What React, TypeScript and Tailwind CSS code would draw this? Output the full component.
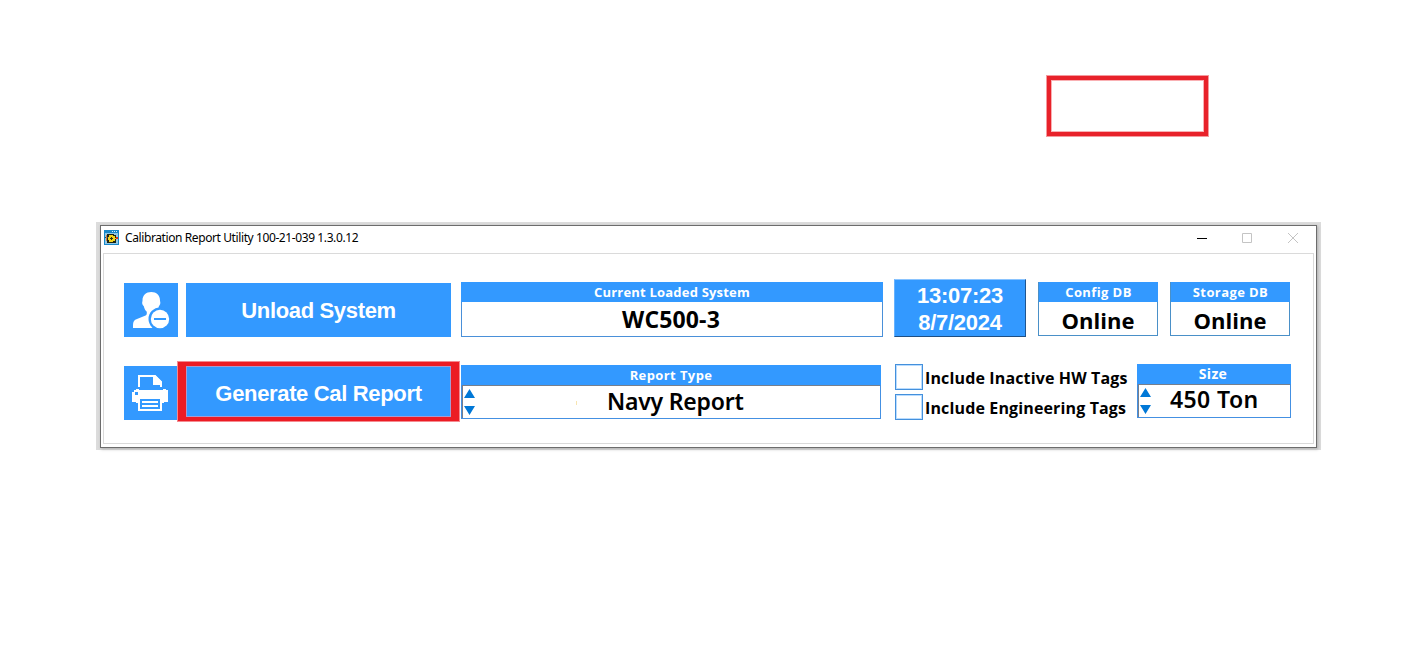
import type { ReactNode } from "react";

const segoe = "font-['Open_Sans','Noto_Sans',sans-serif]";
const arial = "font-['Liberation_Sans',Arial,sans-serif]";

function AppIcon() {
  return (
    <svg width="15" height="15" viewBox="0 0 15 15" shapeRendering="crispEdges">
      <rect width="15" height="15" fill="#1787c9" />
      <rect x="1" y="3" width="13" height="11" fill="#8fc7e6" />
      <rect x="8" y="1" width="1" height="1" fill="#d8efff" />
      <rect x="10" y="1" width="1" height="1" fill="#d8efff" />
      <rect x="12" y="1" width="1" height="1" fill="#d8efff" />
      <path d="M3 4h7v1h2v8H3z" fill="#1c2414" />
      <rect x="1" y="7" width="3" height="1" fill="#174a70" />
      <rect x="2" y="5" width="1" height="6" fill="#c77a42" />
      <rect x="12" y="7" width="2" height="2" fill="#d73526" />
      <path d="M5 5h4v1h2v2h1v1h-1v2H9v1H5v-2H4V7h1z" fill="#f3d31c" />
      <path d="M7 7h1v1h1v1H8v1H7V9H6V8h1z" fill="#27330f" />
    </svg>
  );
}

function UserMinusIcon() {
  return (
    <svg width="54" height="54" viewBox="0 0 54 54">
      <path
        d="M27.3 9c5.2 0 8.7 3.2 8.7 8.4 0 1 .5 1.500.3 2.800-.2 1.400-.7 2-1.300 2.700-.6 2.700-1.800 4.500-3 5.800v5.300l4 2V45H9v-3c0-3.500 1.300-5.200 4-6.100l8.600-3.500c.8-.4 1.200-1 1.200-1.900v-1.800c-1.400-1.300-2.500-3.100-3.100-5.800-.9-.7-1.400-1.500-1.500-2.700-.1-1.200.3-1.800.3-2.800C18.500 12.200 22 9 27.300 9z"
        fill="#fff"
      />
      <circle cx="36" cy="36" r="11.500" fill="#3399ff" />
      <circle cx="36" cy="36" r="9.200" fill="#fff" />
      <rect x="30" y="35" width="12" height="2" fill="#3399ff" />
    </svg>
  );
}

function PrinterIcon() {
  return (
    <svg width="54" height="54" viewBox="0 0 54 54">
      <path d="M15 21V10h16l6 6v5" fill="none" stroke="#fff" strokeWidth="2" />
      <path d="M29 9h2l7 7v3h-9z" fill="#fff" />
      <path d="M10 24h2v-1h3v1h24v-1h3v1h2v12h-4v1H12v-1H8V26h2z" fill="#fff" />
      <rect x="11" y="26" width="3" height="3" fill="#3399ff" />
      <rect x="14" y="32" width="24" height="13" fill="#fff" />
      <path d="M16 33h20v2H16zM18 37h16v2H18zM16 41h20v2H16zM16 33h2v10h-2zM34 33h2v10h-2z" fill="#3399ff" />
      <path d="M18 35h16v2H18zM18 39h16v2H18z" fill="#fff" />
    </svg>
  );
}

function Spinner() {
  return (
    <svg width="11" height="26" viewBox="0 0 11 26" className="shrink-0">
      <path d="M0 9 5.500 0 11 9zM0 17h11l-5.500 9z" fill="#0078d7" />
    </svg>
  );
}

function Button({ children }: { children: ReactNode }) {
  return (
    <button className={`ml-2 flex h-[54px] w-[265px] items-center justify-center bg-[#3399ff] text-[22px] font-bold tracking-[-0.34px] text-white ${arial}`}>
      {children}
    </button>
  );
}

function Status({ title, value }: { title: string; value: string }) {
  return (
    <div className="mt-[3px] ml-3 flex h-[54px] w-[120px] flex-col border border-[#4a90c8]">
      <div className={`-mt-px -mr-px flex h-5 items-center justify-center bg-[#3399ff] pt-0.5 text-[13px] font-bold tracking-[0.4px] text-white ${segoe}`}>
        {title}
      </div>
      <div className={`flex h-[35px] items-center justify-center pt-0.5 text-[22px] font-bold text-black ${segoe}`}>{value}</div>
    </div>
  );
}

function Picker({ title, children, className }: { title: ReactNode; children: ReactNode; className: string }) {
  return (
    <div className={`flex h-[54px] flex-col border border-[#4490e2] ${className}`}>
      <div className={`-mx-px -mt-px flex h-5 items-center justify-center bg-[#3399ff] font-bold text-white ${segoe}`}>
        {title}
      </div>
      <div className="flex h-[33px] items-center border-t border-l border-[#777f8c] pl-px">
        <Spinner />
        {children}
      </div>
    </div>
  );
}

function Check({ label }: { label: string }) {
  return (
    <label className="flex h-[26px] items-center">
      <span className="h-[26px] w-7 shrink-0 border border-[#4490dc] bg-white shadow-[inset_0_0_0_1px_#b9dcff]" />
      <span className={`ml-0.5 pt-0.5 text-base font-bold tracking-[0.14px] whitespace-nowrap text-black ${segoe}`}>{label}</span>
    </label>
  );
}

export default function App() {
  return (
    <main className="relative h-[672px] w-[1416px] overflow-hidden bg-white pt-[222px] pl-[96px]">
      <div className="h-[228px] w-[1225px] bg-[#dcdcdc] pt-[3px] pl-1">
        <section className="h-[223px] w-[1217px] border border-[#6c6c6c] bg-white px-0.5 shadow-[1px_1px_3px_#aaa]">
          <header className="flex h-[27px] items-center pl-px">
            <div className="-mt-1">
              <AppIcon />
            </div>
            <h1 className="-mt-1 ml-1.5 w-[240px] font-['Noto_Sans',sans-serif] text-[12px] tracking-[-0.4px] whitespace-nowrap text-black">
              Calibration Report Utility 100-21-039 1.3.0.12
            </h1>
            <svg width="103" height="12" viewBox="0 0 103 12" className="-mt-1 ml-auto mr-[14px]" fill="none">
              <path d="M0 6.500h10" stroke="#000" />
              <path d="M45.500 1.500h9v9h-9z" stroke="#c4c4c4" />
              <path d="m91 1 10 10m0-10L91 11" stroke="#c4c4c4" />
            </svg>
          </header>

          <div className="h-[191px] w-[1211px] border border-[#dadada] pt-[25px] pl-5">
            <div className="flex h-[58px] items-start">
              <div className="mt-1 h-[54px] w-[54px] bg-[#3399ff]">
                <UserMinusIcon />
              </div>
              <div className="mt-1">
                <Button>Unload System</Button>
              </div>
              <div className="mt-[3px] ml-[10px] h-[55px] w-[422px] border border-[#4a90d9]">
                <div className={`-mx-px -mt-px flex h-5 items-center justify-center bg-[#3399ff] pt-0.5 text-[13px] font-bold tracking-[0.2px] text-white ${segoe}`}>
                  Current Loaded System
                </div>
                <div className={`flex h-[35px] items-center justify-center pr-0.5 text-[23px] font-bold tracking-[0.15px] text-black ${segoe}`}>
                  WC500-3
                </div>
              </div>
              <div className={`ml-[11px] flex h-[58px] w-[132px] flex-col items-center border border-t-[#8ac4ff] border-r-[#1f5590] border-b-[#1f4f83] border-l-[#66b2ff] bg-[#3399ff] pt-0.5 text-[22px] leading-[27px] font-bold tracking-[-0.25px] text-white ${arial}`}>
                <span>13:07:23</span>
                <span>8/7/2024</span>
              </div>
              <Status title="Config DB" value="Online" />
              <Status title="Storage DB" value="Online" />
            </div>

            <div className="mt-[27px] flex h-14 items-start">
              <div className="mt-0.5 h-[54px] w-[54px] bg-[#3399ff]">
                <PrinterIcon />
              </div>
              <div className="mt-0.5">
                <Button>Generate Cal Report</Button>
              </div>
              <Picker title={<span className="pt-0.5 text-[13px] tracking-[0.4px]">Report Type</span>} className="mt-px ml-[10px] w-[420px]">
                <span className="mt-0.5 ml-[101px] h-1 w-px bg-[#f8e5b0]" />
                <span className="-mt-0.5 ml-[30px] font-['Noto_Sans',sans-serif] text-[23px] font-semibold tracking-[-0.22px] text-black">
                  Navy Report
                </span>
              </Picker>
              <div className="ml-[14px] flex w-[242px] flex-col gap-1">
                <Check label="Include Inactive HW Tags" />
                <Check label="Include Engineering Tags" />
              </div>
              <Picker title={<span className="-mt-px pr-0.5 text-[14px] tracking-[0.3px]">Size</span>} className="w-[154px]">
                <span className="-mt-1 ml-[19px] font-['Noto_Sans',sans-serif] text-[23px] font-semibold tracking-[0.4px] text-black">
                  450 Ton
                </span>
              </Picker>
            </div>
          </div>
        </section>
      </div>

      <div className="pointer-events-none absolute top-[361px] left-[177px] h-[61px] w-[283px] border border-[#f58a90]">
        <div className="h-full w-full border-x-8 border-y-4 border-[#ec1c24] shadow-[inset_0_0_0_1px_#a79bd0]" />
      </div>
      <div className="pointer-events-none absolute top-[76px] left-[1047px] h-[60px] w-[161px] border-x-[4px] border-y-[4px] border-[#e8222a] shadow-[0_0_0_1px_#f59a9e,inset_0_0_0_1px_#f9b0b3]" />
    </main>
  );
}
